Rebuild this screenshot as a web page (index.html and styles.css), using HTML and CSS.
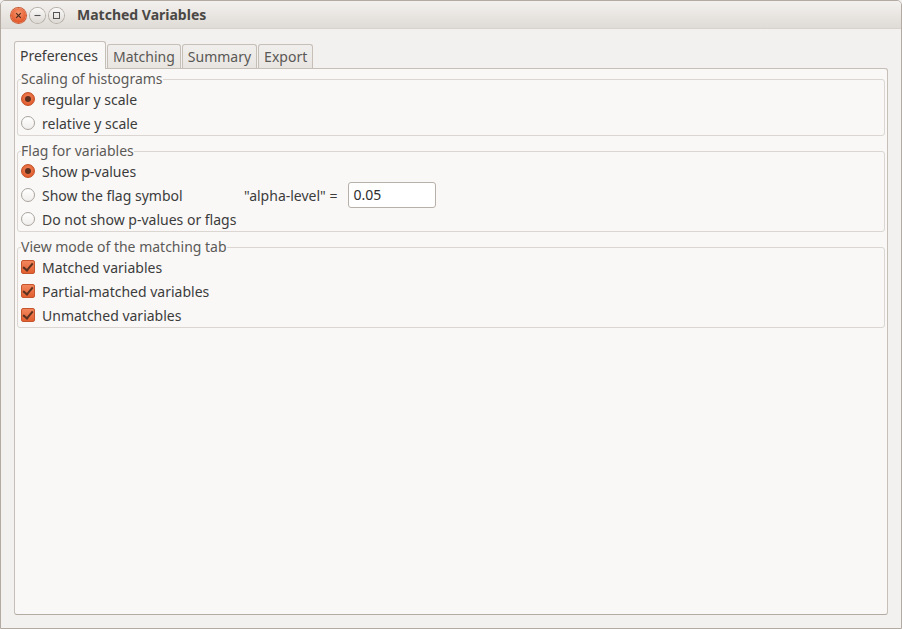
FILE: index.html
```html
<!DOCTYPE html>
<html>
<head>
<meta charset="utf-8">
<link rel="stylesheet" href="styles.css">
</head>
<body>
<div class="window">
  <div class="titlebar">
    <div class="wbuttons">
      <span class="wbtn close"><svg width="15" height="15" viewBox="0 0 15 15"><path d="M5.2 5.2 L9.8 9.8 M9.8 5.2 L5.2 9.8" stroke="#4a2a1c" stroke-width="1.2" fill="none"/></svg></span>
      <span class="wbtn"><svg width="15" height="15" viewBox="0 0 15 15"><path d="M4.5 7.5 H10.5" stroke="#555" stroke-width="1.1"/></svg></span>
      <span class="wbtn"><svg width="15" height="15" viewBox="0 0 15 15"><rect x="4.5" y="4.5" width="6" height="6" stroke="#555" stroke-width="1" fill="none"/></svg></span>
    </div>
    <div class="title">Matched Variables</div>
  </div>
  <div class="content">
    <div class="tabs">
      <div class="tab active">Preferences</div>
      <div class="tab">Matching</div>
      <div class="tab">Summary</div>
      <div class="tab">Export</div>
    </div>
    <div class="panel">
      <fieldset class="frame">
        <legend>Scaling of histograms</legend>
        <div class="row"><span class="radio on"></span>regular y scale</div>
        <div class="row"><span class="radio"></span>relative y scale</div>
      </fieldset>
      <fieldset class="frame">
        <legend>Flag for variables</legend>
        <div class="row"><span class="radio on"></span>Show p-values</div>
        <div class="row"><span class="radio"></span><span class="lbl-flag">Show the flag symbol</span><span class="alpha">"alpha-level" =</span><span class="entry">0.05</span></div>
        <div class="row"><span class="radio"></span>Do not show p-values or flags</div>
      </fieldset>
      <fieldset class="frame">
        <legend>View mode of the matching tab</legend>
        <div class="row"><span class="check"></span>Matched variables</div>
        <div class="row"><span class="check"></span>Partial-matched variables</div>
        <div class="row"><span class="check"></span>Unmatched variables</div>
      </fieldset>
    </div>
  </div>
</div>
</body>
</html>
```
FILE: styles.css
```css
html, body {
  margin: 0;
  padding: 0;
  background: #f2f1f0;
}
body {
  font-family: "Noto Sans", "DejaVu Sans", sans-serif;
  font-size: 14px;
  color: #3c3c3c;
}
.window {
  box-sizing: border-box;
  width: 902px;
  height: 629px;
  border: 1px solid #b3aaa1;
  border-radius: 5px 5px 0 0;
  background: #f2f1ef;
  display: flex;
  flex-direction: column;
}
.titlebar {
  height: 27px;
  flex: none;
  display: flex;
  align-items: center;
  background: linear-gradient(#f3f1ef, #dfdbd6);
  border-radius: 4px 4px 0 0;
  border-bottom: 1px solid #d8d3ce;
}
.wbuttons {
  display: flex;
  gap: 4px;
  margin-left: 10px;
  margin-top: 1px;
}
.wbtn {
  width: 15px;
  height: 15px;
  border-radius: 50%;
  box-sizing: border-box;
  background: linear-gradient(#fbfaf9, #dcd8d3);
  box-shadow: 0 0 0 1px #b6b0a9;
  display: flex;
}
.wbtn.close {
  background: radial-gradient(circle at 50% 35%, #f89a72, #e4582a 70%);
  box-shadow: 0 0 0 1px #c85a33;
}
.title {
  margin-left: 13px;
  font-weight: bold;
  font-size: 14px;
  color: #4a4845;
  margin-bottom: 1px;
}
.content {
  flex: 1;
  display: flex;
  flex-direction: column;
  padding: 12px 13px 13px 13px;
}
.tabs {
  display: flex;
  align-items: flex-end;
  height: 27px;
  flex: none;
  position: relative;
  z-index: 1;
}
.tab {
  box-sizing: border-box;
  height: 24px;
  padding: 0 5px;
  border: 1px solid #c6bfb7;
  border-bottom: none;
  border-radius: 3px 3px 0 0;
  background: linear-gradient(#f1efed, #e8e5e1);
  color: #5a5855;
  line-height: 23px;
  margin-right: 1px;
}
.tab.active {
  padding: 0 7px 0 5px;
  background: #f9f8f7;
  color: #3c3c3c;
  line-height: 27px;
  margin-bottom: -1px;
  height: 28px;
}
.panel {
  flex: 1;
  border: 1px solid #c6bfb7;
  border-bottom-color: #b3aaa1;
  border-radius: 0 3px 3px 3px;
  background: #f9f8f7;
  padding: 2px 2px 0 2px;
}
.frame {
  margin: 0 0 7px 0;
  padding: 0 3px;
  border: 1px solid #dbd6d1;
  border-radius: 3px;
}
.frame legend {
  padding: 0;
  line-height: 16px;
  color: #5c5a57;
}
.row {
  box-sizing: border-box;
  height: 24px;
  display: flex;
  align-items: center;
}
.radio {
  box-sizing: border-box;
  width: 14px;
  height: 14px;
  border-radius: 50%;
  border: 1px solid #aaa49d;
  background: linear-gradient(#ffffff, #f0eeec);
  margin-right: 7px;
  display: flex;
  align-items: center;
  justify-content: center;
}
.radio.on {
  border-color: #c14f24;
  background: radial-gradient(circle at 50% 40%, #f38a60, #e0592a 80%);
}
.radio.on::after {
  content: "";
  width: 6px;
  height: 6px;
  border-radius: 50%;
  background: #5e2f1e;
}
.check {
  box-sizing: border-box;
  width: 14px;
  height: 14px;
  border-radius: 2px;
  border: 1px solid #c4552c;
  background: linear-gradient(#f3875d, #e25f30);
  margin-right: 7px;
  position: relative;
}
.check::after {
  content: "";
  position: absolute;
  left: 3px;
  top: 0px;
  width: 4px;
  height: 8px;
  border: solid #5a3222;
  border-width: 0 2px 2px 0;
  transform: rotate(40deg);
}
.lbl-flag {
  width: 202px;
}
.alpha {
  margin-right: 11px;
}
.entry {
  box-sizing: border-box;
  width: 88px;
  height: 26px;
  border: 1px solid #b8b1aa;
  border-radius: 3px;
  background: #fff;
  padding-left: 4px;
  line-height: 24px;
  color: #2e2e2e;
}
```
